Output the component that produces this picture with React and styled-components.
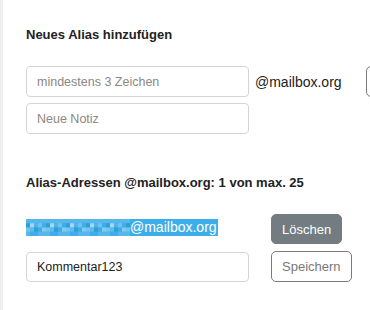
import React from 'react';
import styled, { createGlobalStyle } from 'styled-components';

const Global = createGlobalStyle`
  html, body {
    margin: 0;
    padding: 0;
    background: #fff;
    overflow: hidden;
  }
  body {
    font-family: "Liberation Sans", Arial, sans-serif;
    color: #222;
  }
  * { box-sizing: border-box; }
`;

const Page = styled.div`
  width: 370px;
  height: 310px;
  border-left: 3px solid #efeeec;
  padding: 27px 0 0 23px;
  overflow: hidden;
`;

const Heading = styled.h4`
  margin: 0;
  font-size: 13px;
  line-height: 15px;
  font-weight: bold;
  color: #222;
  white-space: nowrap;
`;

const Section = styled.section`
  margin-top: ${p => p.$top ?? 0}px;
`;

const Stack = styled.div`
  display: flex;
  flex-direction: column;
  gap: ${p => p.$gap ?? 6}px;
  margin-top: ${p => p.$top ?? 0}px;
`;

const Row = styled.div`
  display: flex;
  align-items: center;
  gap: ${p => p.$gap ?? 6}px;
  white-space: nowrap;
`;

const Input = styled.input`
  width: 223px;
  height: ${p => p.$h || 31}px;
  flex: none;
  border: 1px solid #d3d6d9;
  border-radius: 4px;
  padding: 0 10px;
  font-family: inherit;
  font-size: 12.5px;
  color: #222;
  background: #fff;
  outline: none;
  &::placeholder {
    color: #8c8782;
  }
`;

const Domain = styled.span`
  font-size: 14px;
  line-height: 16px;
  color: #222;
`;

const Button = styled.button`
  flex: none;
  height: ${p => p.$h || 30}px;
  padding: 0 10px;
  border-radius: 5px;
  font-family: inherit;
  font-size: 13px;
  cursor: pointer;
  border: 1px solid ${p => (p.$solid ? '#737d81' : '#7a7a7a')};
  background: ${p => (p.$solid ? '#737d81' : '#fff')};
  color: ${p => (p.$solid ? '#fff' : '#777')};
`;

const Selected = styled.span`
  display: inline-flex;
  align-items: center;
  width: 192px;
  height: 17px;
  background: #3daee9;
  color: #fff;
  font-size: 14px;
  line-height: 17px;
  flex: none;
`;

const AliasCell = styled.div`
  width: 245px;
  flex: none;
`;

const shades = ['#3daee9', '#5dbbec', '#86cbf0', '#2f9fdb', '#a5d7f3', '#4fb4ea', '#74c4ee'];

const Mosaic = () => {
  const cells = [];
  const cols = 26;
  const rows = 4;
  for (let r = 0; r < rows; r++) {
    for (let c = 0; c < cols; c++) {
      const idx = (c * 7 + r * 3 + ((c * r) % 5)) % shades.length;
      const fill = r === 0 || r === rows - 1 ? (idx % 2 ? '#3daee9' : '#55b7eb') : shades[idx];
      cells.push(<rect key={r + '-' + c} x={c * 4} y={r * 4.25} width="4" height="4.25" fill={fill} />);
    }
  }
  return (
    <svg width="104" height="17" viewBox="0 0 104 17" style={{ display: 'block', flex: 'none' }}>
      {cells}
    </svg>
  );
};

export default function App() {
  return (
    <>
      <Global />
      <Page>
        <Heading>Neues Alias hinzufügen</Heading>
        <Stack $top={24}>
          <Row>
            <Input placeholder="mindestens 3 Zeichen" />
            <Domain>@mailbox.org</Domain>
            <Button $h={31} style={{ marginLeft: 18 }} aria-label="Hinzufügen" />
          </Row>
          <Input placeholder="Neue Notiz" />
        </Stack>

        <Section $top={41}>
          <Heading>Alias-Adressen @mailbox.org: 1 von max. 25</Heading>
          <Stack $top={24} $gap={7}>
            <Row $gap={0}>
              <AliasCell>
                <Selected>
                  <Mosaic />
                  @mailbox.org
                </Selected>
              </AliasCell>
              <Button $solid>Löschen</Button>
            </Row>
            <Row $gap={22}>
              <Input $h={30} defaultValue="Kommentar123" />
              <Button $h={31}>Speichern</Button>
            </Row>
          </Stack>
        </Section>
      </Page>
    </>
  );
}
